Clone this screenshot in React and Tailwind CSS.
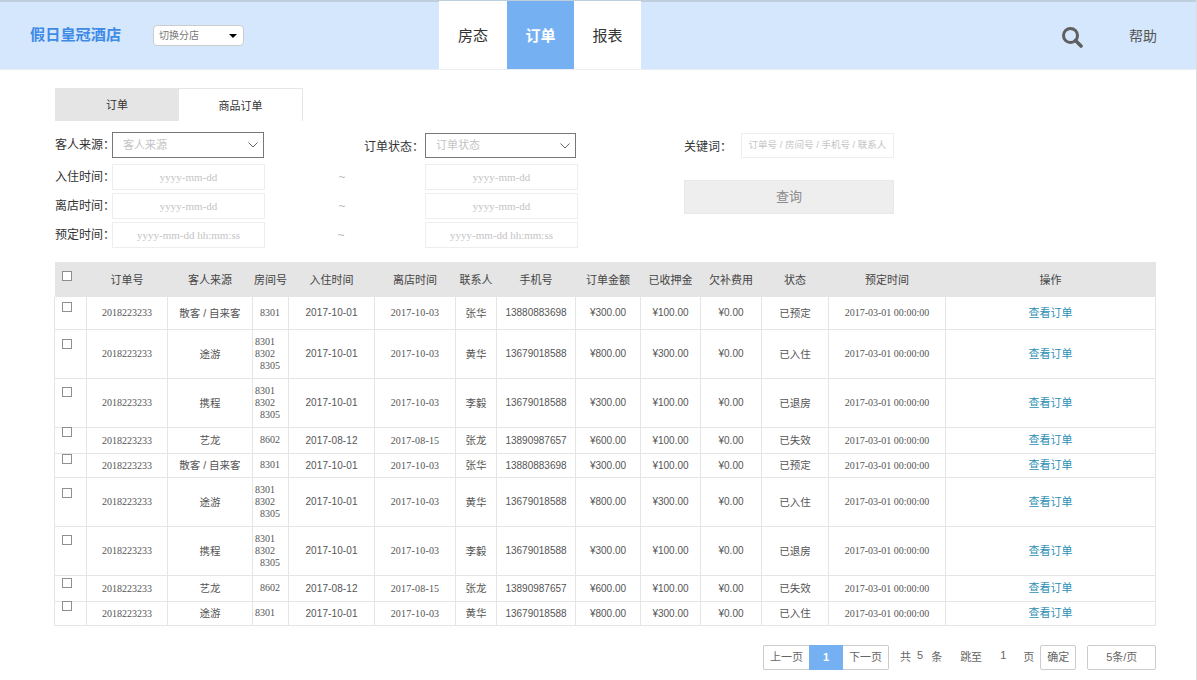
import React from 'react';

const FONT = '"Liberation Sans", "Noto Sans CJK SC", sans-serif';
const SERIF = '"Liberation Serif", "Noto Sans CJK SC", serif';

const columns = [32, 81, 85, 36, 86, 81, 41, 79, 65, 60, 61, 67, 117, 210];
const headers = ['订单号', '客人来源', '房间号', '入住时间', '离店时间', '联系人', '手机号', '订单金额', '已收押金', '欠补费用', '状态', '预定时间', '操作'];

const orders = [
  { h: 'h-[32px]', check: 'mt-[5px]', source: '散客 / 自来客', rooms: ['8301'], in: '2017-10-01', out: '2017-10-03', name: '张华', phone: '13880883698', total: '¥300.00', deposit: '¥100.00', status: '已预定' },
  { h: 'h-[49px]', check: 'mt-[9px]', source: '途游', rooms: ['8301', '8302', '8305'], in: '2017-10-01', out: '2017-10-03', name: '黄华', phone: '13679018588', total: '¥800.00', deposit: '¥300.00', status: '已入住' },
  { h: 'h-[49px]', check: 'mt-[8px]', source: '携程', rooms: ['8301', '8302', '8305'], in: '2017-10-01', out: '2017-10-03', name: '李毅', phone: '13679018588', total: '¥300.00', deposit: '¥100.00', status: '已退房' },
  { h: 'h-[26px]', check: '-mt-[1px]', source: '艺龙', rooms: ['8602'], in: '2017-08-12', out: '2017-08-15', name: '张龙', phone: '13890987657', total: '¥600.00', deposit: '¥100.00', status: '已失效' },
  { h: 'h-[24px]', check: 'mt-0', source: '散客 / 自来客', rooms: ['8301'], in: '2017-10-01', out: '2017-10-03', name: '张华', phone: '13880883698', total: '¥300.00', deposit: '¥100.00', status: '已预定' },
  { h: 'h-[49px]', check: 'mt-[10px]', source: '途游', rooms: ['8301', '8302', '8305'], in: '2017-10-01', out: '2017-10-03', name: '黄华', phone: '13679018588', total: '¥800.00', deposit: '¥300.00', status: '已入住' },
  { h: 'h-[49px]', check: 'mt-[8px]', source: '携程', rooms: ['8301', '8302', '8305'], in: '2017-10-01', out: '2017-10-03', name: '李毅', phone: '13679018588', total: '¥300.00', deposit: '¥100.00', status: '已退房' },
  { h: 'h-[26px]', check: 'mt-[2px]', source: '艺龙', rooms: ['8602'], in: '2017-08-12', out: '2017-08-15', name: '张龙', phone: '13890987657', total: '¥600.00', deposit: '¥100.00', status: '已失效' },
  { h: 'h-[24px]', check: '-mt-[1px]', source: '途游', rooms: ['8301'], flush: true, in: '2017-10-01', out: '2017-10-03', name: '黄华', phone: '13679018588', total: '¥800.00', deposit: '¥300.00', status: '已入住' },
];

function Checkbox({ className = '' }) {
  return <div className={`relative z-10 w-[10px] h-[10px] ml-[7px] border border-[#8f8f8f] bg-white ${className}`} />;
}

function DateInput({ text }) {
  return (
    <div className="h-[26px] w-[153px] border border-[#eeeeee] flex items-center justify-center text-[11px] text-[#c4c4c4]" style={{ fontFamily: SERIF }}>
      {text}
    </div>
  );
}

function SelectBox({ text, className = '' }) {
  return (
    <div className={`border border-[#777777] flex items-center justify-between pl-[10px] pr-[5px] text-[11px] text-[#c4c4c4] ${className}`}>
      <span>{text}</span>
      <svg className="w-[10px] h-[6px]" viewBox="0 0 10 6" fill="none" stroke="#555555" strokeWidth="0.9">
        <path d="M0.5 0.5 L5 5 L9.5 0.5" />
      </svg>
    </div>
  );
}

function Label({ children }) {
  return <span className="text-[12px] text-[#333333] whitespace-nowrap">{children}</span>;
}

export default function App() {
  return (
    <div className="w-[1197px] h-[680px] overflow-hidden bg-white border-r border-[#dddddd]" style={{ fontFamily: FONT }}>
      {/* Top bar */}
      <header className="h-[70px] bg-[#d4e7fc] border-t-2 border-b border-t-[#bfcedd] border-b-[#e8edf2] flex items-center">
        <div className="w-[153px] pl-[30px] text-[15.2px] font-bold text-[#3f8ae6] whitespace-nowrap">假日皇冠酒店</div>
        <div className="w-[91px] h-[21px] bg-white border border-[#cccccc] rounded-[4px] flex items-center justify-between pl-[5px] pr-[6px] text-[10px] text-[#777777]">
          <span>切换分店</span>
          <span className="w-0 h-0 border-x-[4px] border-x-transparent border-t-[4px] border-t-black" />
        </div>
        <nav className="ml-[195px] flex self-stretch -mt-[1px]">
          <div className="w-[68px] pt-[3px] bg-white flex items-center justify-center text-[15px] text-[#333333]">房态</div>
          <div className="w-[67px] pt-[3px] bg-[#75b0f3] flex items-center justify-center text-[15px] font-bold text-white">订单</div>
          <div className="w-[67px] pt-[3px] bg-white flex items-center justify-center text-[15px] text-[#333333]">报表</div>
        </nav>
        <svg className="ml-[420px] mt-[2px] w-[22px] h-[22px]" viewBox="0 0 22 22" fill="none" stroke="#5f5f5f">
          <circle cx="9.5" cy="9.5" r="7" strokeWidth="3" />
          <path d="M14.5 14.5 L20 20" strokeWidth="3.6" strokeLinecap="round" />
        </svg>
        <div className="ml-[46px] mt-[1px] text-[14px] text-[#555555] whitespace-nowrap">帮助</div>
      </header>

      {/* Tabs */}
      <div className="mt-[18px] ml-[55px] flex h-[33px]">
        <div className="w-[124px] pt-[2px] bg-[#e5e5e5] flex items-center justify-center text-[11px] text-[#333333]">订单</div>
        <div className="w-[124px] pt-[2px] border-t border-r border-[#e5e5e5] flex items-center justify-center text-[11px] text-[#333333]">商品订单</div>
      </div>

      {/* Filters */}
      <div className="mt-[11px] ml-[55px] flex">
        <div className="grid grid-cols-[57px_153px_160px_153px] grid-rows-[29px_26px_26px_26px] gap-y-[3px]">
          <div className="flex items-center h-[26px]"><Label>客人来源：</Label></div>
          <SelectBox text="客人来源" className="w-[152px] h-[26px]" />
          <div className="flex items-center justify-end pr-[1px] pt-[1px] h-[29px]"><Label>订单状态：</Label></div>
          <SelectBox text="订单状态" className="w-[151px] h-[25px] mt-[1px]" />

          <div className="flex items-center"><Label>入住时间：</Label></div>
          <DateInput text="yyyy-mm-dd" />
          <div className="flex items-center justify-center pr-[6px] text-[12px] text-[#bbbbbb]">~</div>
          <DateInput text="yyyy-mm-dd" />

          <div className="flex items-center"><Label>离店时间：</Label></div>
          <DateInput text="yyyy-mm-dd" />
          <div className="flex items-center justify-center pr-[6px] text-[12px] text-[#bbbbbb]">~</div>
          <DateInput text="yyyy-mm-dd" />

          <div className="flex items-center"><Label>预定时间：</Label></div>
          <DateInput text="yyyy-mm-dd hh:mm:ss" />
          <div className="flex items-center justify-center pr-[8px] text-[12px] text-[#bbbbbb]">~</div>
          <DateInput text="yyyy-mm-dd hh:mm:ss" />
        </div>
        <div className="ml-[106px] w-[210px] pt-[1px]">
          <div className="flex items-center h-[25px]">
            <span className="w-[57px]"><Label>关键词：</Label></span>
            <div className="w-[153px] h-[25px] border border-[#eeeeee] flex items-center justify-center text-[9.5px] text-[#c4c4c4] whitespace-nowrap">
              订单号 / 房间号 / 手机号 / 联系人
            </div>
          </div>
          <button className="mt-[22px] w-[210px] h-[34px] bg-[#eeeeee] border border-[#e8e8e8] text-[13px] text-[#8c8c8c]">查询</button>
        </div>
      </div>

      {/* Order table */}
      <table className="mt-[14px] ml-[54px] w-[1102px] table-fixed border-collapse text-[10px] text-[#555555]">
        <colgroup>
          {columns.map((w, i) => <col key={i} style={{ width: w }} />)}
        </colgroup>
        <thead>
          <tr className="h-[35px] bg-[#e5e5e5]">
            <th className="p-0 align-top font-normal"><Checkbox className="mt-[9px]" /></th>
            {headers.map((h) => (
              <th key={h} className="p-0 pt-[1px] font-normal text-[11px] text-[#444444] text-center whitespace-nowrap">{h}</th>
            ))}
          </tr>
        </thead>
        <tbody>
          {orders.map((o, i) => (
            <tr key={i} className={`${o.h} border-b border-[#e5e5e5]`}>
              <td className="p-0 align-top border-x border-[#e5e5e5]"><Checkbox className={o.check} /></td>
              <td className="p-0 text-center border-r border-[#e5e5e5]" style={{ fontFamily: SERIF }}>2018223233</td>
              <td className="p-0 pt-[2px] text-center border-r border-[#e5e5e5] text-[10.5px] whitespace-nowrap">{o.source}</td>
              <td className="p-0 border-r border-[#e5e5e5] leading-[12px] pl-[2px]" style={{ fontFamily: SERIF }}>
                {o.rooms.length > 1 ? (
                  <>
                    <div>{o.rooms[0]}</div>
                    <div>{o.rooms[1]}</div>
                    <div className="pl-[5px]">{o.rooms[2]}</div>
                  </>
                ) : (
                  <div className={o.flush ? 'pl-0' : 'pl-[5px]'}>{o.rooms[0]}</div>
                )}
              </td>
              <td className="p-0 text-center border-r border-[#e5e5e5] tracking-[0.1px]">{o.in}</td>
              <td className="p-0 text-center border-r border-[#e5e5e5] tracking-[0.2px]" style={{ fontFamily: SERIF }}>{o.out}</td>
              <td className="p-0 pt-[2px] text-center border-r border-[#e5e5e5] text-[10.5px]">{o.name}</td>
              <td className="p-0 text-center border-r border-[#e5e5e5]">{o.phone}</td>
              <td className="p-0 text-center border-r border-[#e5e5e5]">{o.total}</td>
              <td className="p-0 text-center border-r border-[#e5e5e5]">{o.deposit}</td>
              <td className="p-0 text-center border-r border-[#e5e5e5]">¥0.00</td>
              <td className="p-0 pt-[2px] text-center border-r border-[#e5e5e5] text-[10.5px]">{o.status}</td>
              <td className="p-0 text-center border-r border-[#e5e5e5]" style={{ fontFamily: SERIF }}>2017-03-01 00:00:00</td>
              <td className="p-0 pt-[1px] text-center border-r border-[#e5e5e5] text-[11px] text-[#2c8fb5]">查看订单</td>
            </tr>
          ))}
        </tbody>
      </table>

      {/* Pagination */}
      <div className="mt-[19px] ml-[763px] w-[393px] flex items-center text-[11px] text-[#666666] whitespace-nowrap">
        <div className="flex h-[25px] shrink-0">
          <div className="w-[46px] border border-r-0 border-[#cccccc] rounded-l-[2px] flex items-center justify-center">上一页</div>
          <div className="w-[34px] bg-[#75b0f3] text-white font-bold flex items-center justify-center">1</div>
          <div className="w-[46px] border border-l-0 border-[#cccccc] rounded-r-[2px] flex items-center justify-center">下一页</div>
        </div>
        <span className="ml-[11px]">共</span>
        <span className="ml-[6px] -mt-[3px]">5</span>
        <span className="ml-[8px]">条</span>
        <span className="ml-[18px]">跳至</span>
        <span className="ml-[18px] -mt-[3px]">1</span>
        <span className="ml-[17px]">页</span>
        <div className="ml-[6px] w-[36px] h-[25px] shrink-0 border border-[#cccccc] rounded-[2px] flex items-center justify-center">确定</div>
        <div className="ml-[11px] w-[69px] h-[25px] shrink-0 border border-[#cccccc] rounded-[2px] flex items-center justify-center">5条/页</div>
      </div>
    </div>
  );
}
